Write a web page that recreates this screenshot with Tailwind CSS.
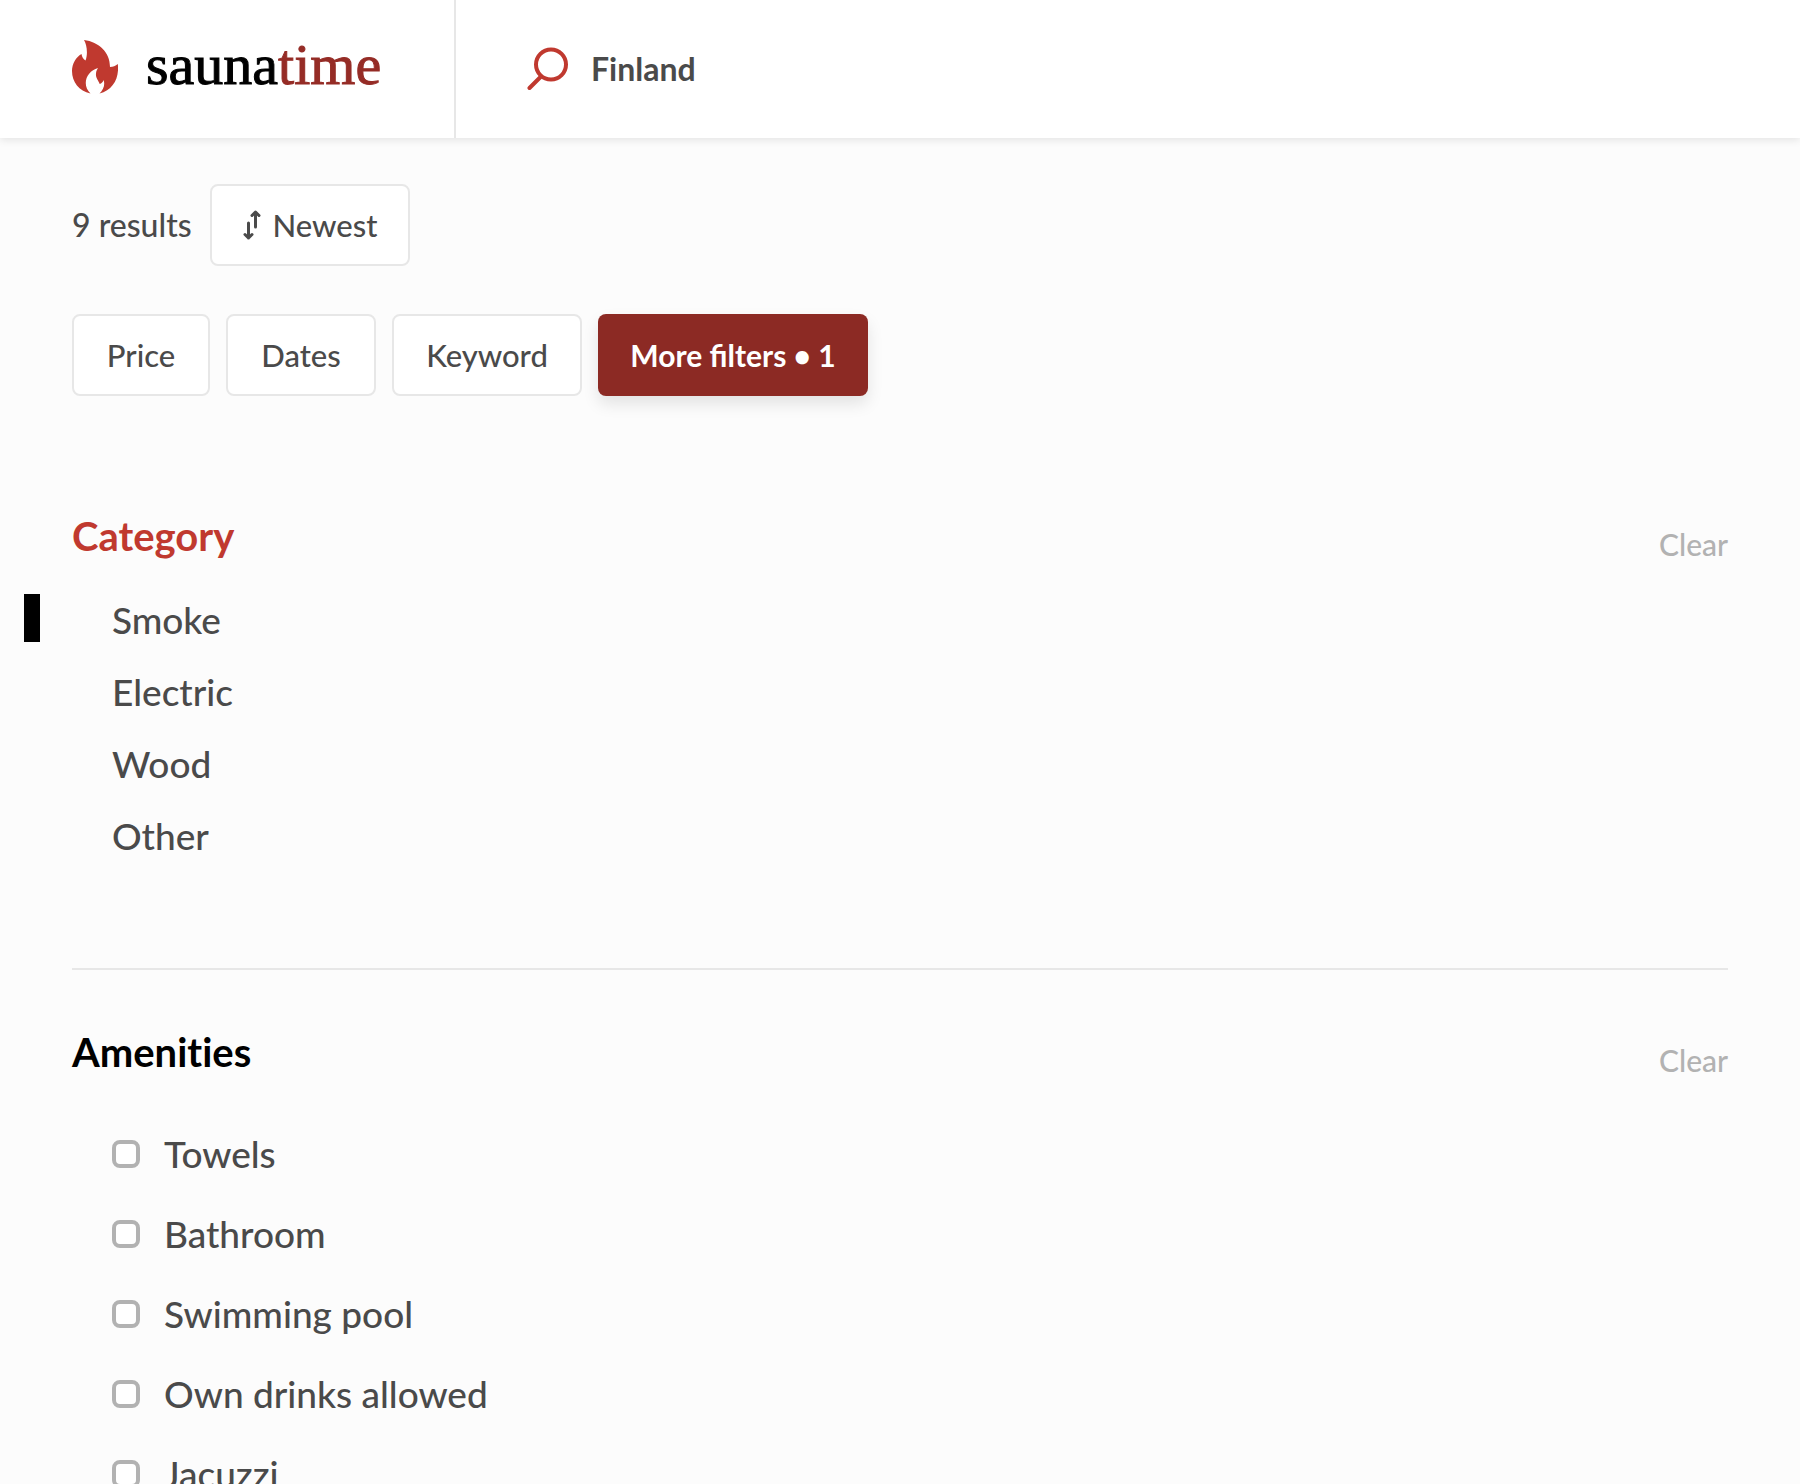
<!DOCTYPE html>
<html lang="en">
<head>
<meta charset="utf-8">
<title>Saunatime</title>
<script src="https://cdn.jsdelivr.net/npm/@tailwindcss/browser@4"></script>
</head>
<body class="flex h-screen flex-col overflow-hidden bg-[#fcfcfc] font-[Lato,sans-serif] font-medium text-[#4a4a4a]">
<header class="relative flex h-[138px] shrink-0 bg-white shadow-[0_2px_8px_rgba(0,0,0,0.1)]">
  <a href="#" class="flex w-[456px] shrink-0 items-center gap-7 border-r-2 border-[#e7e7e7] pb-1 pl-[72px]">
    <svg class="h-[54px] w-[46px] shrink-0" viewBox="0 0 46 54" fill="#c0392f" aria-hidden="true"><path d="M12 0C27 2 38 12 38 27C41 27 43.500 26 45.800 24C47.500 38 41 50 27.500 53.500C31 50 33.500 45 31.500 40C31 42 29.500 43.500 27.700 44C26.500 40.500 23.500 38 24 33.500C24.200 31 25 29.500 26 28C15 31 9 44 18.500 53.500C7 51 0 42 0 31C0 24 4 17 9.500 14C10 17 11 19 13.500 20.500C16 14 15 5 12 0Z"/></svg>
    <span class="pb-1 font-['Liberation_Serif',serif] text-[58px] leading-[60px] font-normal text-black [-webkit-text-stroke:1px]">sauna<span class="text-[#952c26]">time</span></span>
  </a>
  <form class="flex min-w-0 flex-1 items-center gap-[22px] pl-[71px]">
    <svg class="h-11 w-[42px] shrink-0" viewBox="0 0 42 44" fill="none" stroke="#c0392f" stroke-width="4" stroke-linecap="round" aria-hidden="true"><circle cx="24" cy="17.500" r="15"/><path d="M2.500 41L13.500 30"/></svg>
    <input type="text" aria-label="Location" value="Finland" class="min-w-0 flex-1 bg-transparent text-[32px] leading-10 font-bold outline-none">
  </form>
</header>
<main class="px-[72px] pt-[46px]">
  <div class="flex items-center gap-4 text-[32px] leading-10">
    <span class="min-w-[122px] whitespace-nowrap">9 results</span>
    <button type="button" class="flex h-[82px] min-w-[200px] items-center justify-center gap-3 rounded-lg border-2 border-[#e7e7e7] bg-white text-[31px]">
      <svg class="h-[30px] w-[18px]" viewBox="0 0 18 30" fill="none" stroke="#4a4a4a" stroke-width="3" stroke-linecap="round" stroke-linejoin="round" aria-hidden="true"><path d="M5.500 13V28M2 24.500L5.500 28L9 24.500M12.500 17V2M9 5.500L12.500 2L16 5.500"/></svg>
      Newest
    </button>
  </div>
  <div class="mt-12 flex gap-4 text-[31px] leading-10">
    <button type="button" class="h-[82px] min-w-[138px] rounded-lg border-2 border-[#e7e7e7] bg-white">Price</button>
    <button type="button" class="h-[82px] min-w-[150px] rounded-lg border-2 border-[#e7e7e7] bg-white">Dates</button>
    <button type="button" class="h-[82px] min-w-[190px] rounded-lg border-2 border-[#e7e7e7] bg-white">Keyword</button>
    <button type="button" class="h-[82px] min-w-[270px] rounded-lg bg-[#8c2a24] text-[30px] font-bold text-white shadow-[0_8px_16px_rgba(0,0,0,0.1)]">More filters • 1</button>
  </div>
  <section class="border-b-2 border-[#e7e7e7] pt-[116px] pb-24">
    <div class="flex h-14 justify-between">
      <h2 class="text-[40px] leading-12 font-bold text-[#c0392f]">Category</h2>
      <button type="button" class="mt-3 h-10 text-[30px] leading-10 text-[#b2b2b2]">Clear</button>
    </div>
    <ul class="mt-4 pl-10 text-[37px] leading-[72px]">
      <li class="relative"><span class="absolute top-[10px] -left-[88px] h-12 w-4 bg-black"></span><button type="button">Smoke</button></li>
      <li><button type="button">Electric</button></li>
      <li><button type="button">Wood</button></li>
      <li><button type="button">Other</button></li>
    </ul>
  </section>
  <section class="pt-[58px]">
    <div class="flex h-14 justify-between">
      <h2 class="text-[40px] leading-12 font-bold text-black [font-variant-ligatures:none]">Amenities</h2>
      <button type="button" class="mt-3 h-10 text-[30px] leading-10 text-[#b2b2b2]">Clear</button>
    </div>
    <ul class="mt-[30px] pl-10 text-[37px] leading-[80px]">
      <li><label class="flex h-20 items-center gap-6"><input type="checkbox" class="size-7 appearance-none rounded-lg border-4 border-[#b2b2b2] bg-white">Towels</label></li>
      <li><label class="flex h-20 items-center gap-6"><input type="checkbox" class="size-7 appearance-none rounded-lg border-4 border-[#b2b2b2] bg-white">Bathroom</label></li>
      <li><label class="flex h-20 items-center gap-6"><input type="checkbox" class="size-7 appearance-none rounded-lg border-4 border-[#b2b2b2] bg-white">Swimming pool</label></li>
      <li><label class="flex h-20 items-center gap-6"><input type="checkbox" class="size-7 appearance-none rounded-lg border-4 border-[#b2b2b2] bg-white">Own drinks allowed</label></li>
      <li><label class="flex h-20 items-center gap-6"><input type="checkbox" class="size-7 appearance-none rounded-lg border-4 border-[#b2b2b2] bg-white">Jacuzzi</label></li>
    </ul>
  </section>
</main>
</body>
</html>
